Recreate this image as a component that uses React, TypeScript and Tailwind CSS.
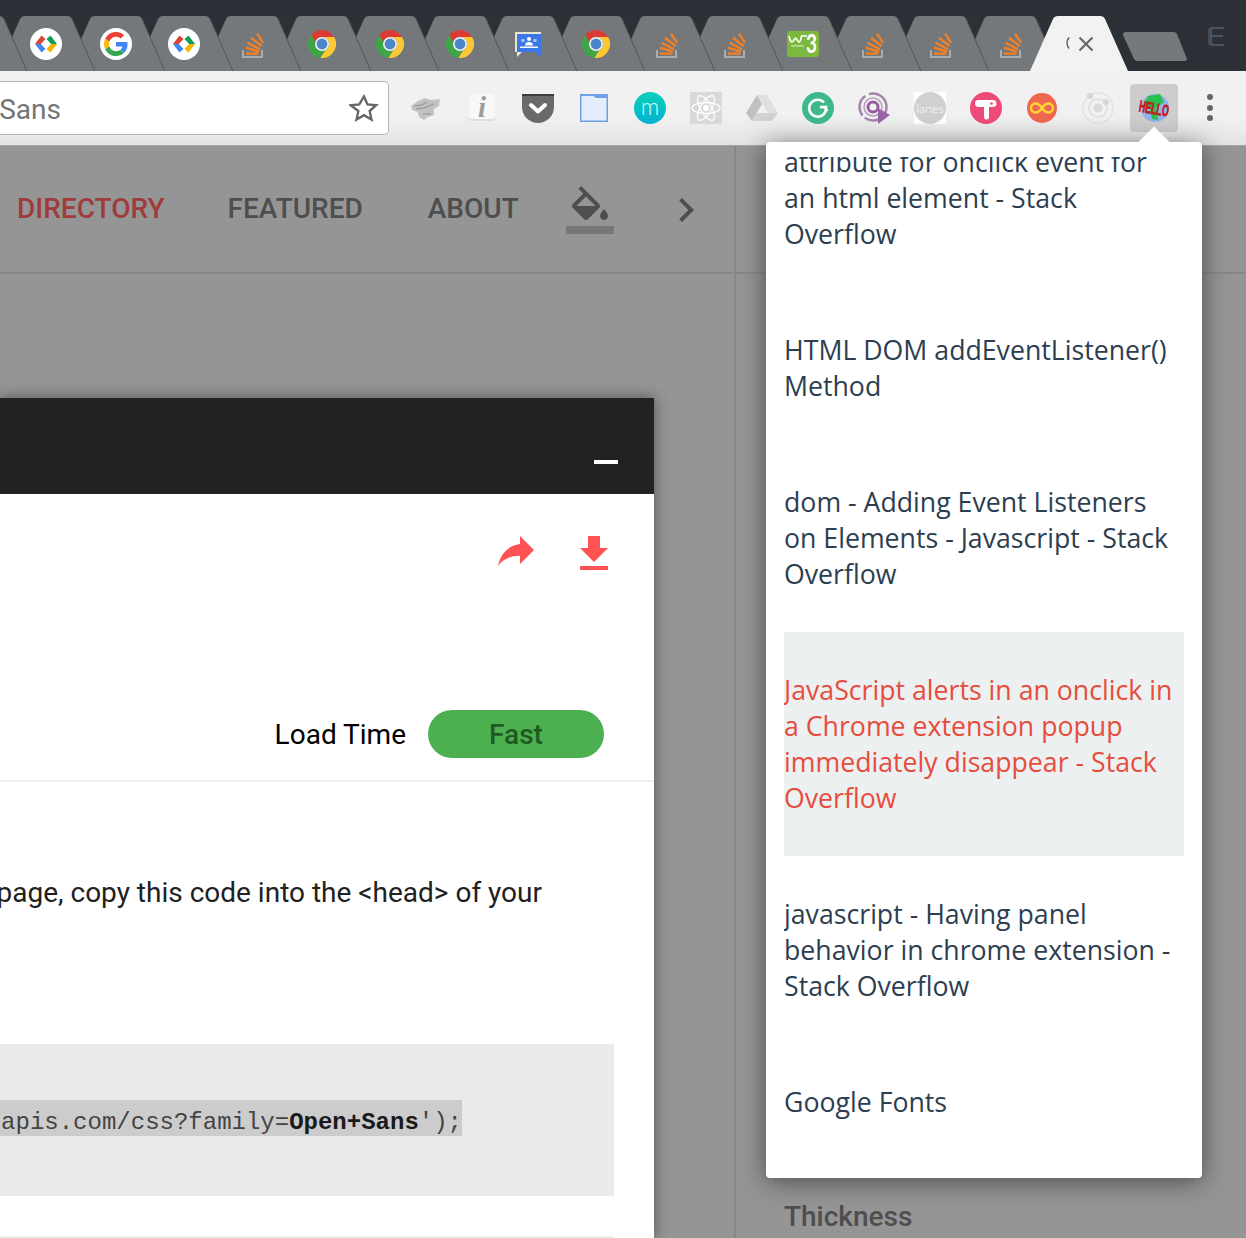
import React from "react";

const Chrome = () => (
  <svg width="28" height="28" viewBox="0 0 28 28">
    <path d="M3.3 5A14 14 0 0 1 26.12 7H14A7 7 0 0 0 7.2 12.2Z" fill="#db3b33" />
    <path d="M3.3 5A14 14 0 0 0 12.4 27.9L17.5 20A7 7 0 0 1 7.2 12.2Z" fill="#3fa648" />
    <path d="M26.12 7A14 14 0 0 1 12.4 27.9L17.5 20A7 7 0 0 0 14 7Z" fill="#fcc934" />
    <circle cx="14" cy="14" r="7" fill="#f1f1f1" />
    <circle cx="14" cy="14" r="5.4" fill="#4a86c8" />
  </svg>
);

const SO = () => (
  <svg width="32" height="32" viewBox="0 0 32 32" fill="none">
    <path d="M7 22v7h19v-7" stroke="#a9adb0" strokeWidth="2" />
    <g stroke="#f48024" strokeWidth="2.4">
      <path d="M21 5.7l6 9" />
      <path d="M15 9.7l10.7 8.3" />
      <path d="M11.5 14.7l12.5 6.6" />
      <path d="M10 19.7l13 4" />
      <path d="M10 25.6h12.4" />
    </g>
  </svg>
);

const GDev = () => (
  <svg width="32" height="32" viewBox="0 0 32 32">
    <circle cx="16" cy="16" r="16" fill="#fff" />
    <path d="M5 16L11.500 7.500 15.500 11 10.800 16z" fill="#db4437" />
    <path d="M5 16h5.800L15.500 21 11.500 24.500z" fill="#4285f4" />
    <path d="M27 16L20.500 7.500 16.500 11 21.200 16z" fill="#0f9d58" />
    <path d="M27 16h-5.800L16.500 21 20.500 24.500z" fill="#f4b400" />
  </svg>
);

const GLogo = () => (
  <svg width="32" height="32" viewBox="0 0 32 32">
    <circle cx="16" cy="16" r="16" fill="#fff" />
    <g transform="translate(4 4) scale(.5)">
      <path d="M24 9.5c3.54 0 6.71 1.22 9.21 3.6l6.85-6.85C35.9 2.38 30.47 0 24 0 14.62 0 6.51 5.38 2.56 13.22l7.98 6.19C12.43 13.72 17.74 9.5 24 9.5z" fill="#EA4335" />
      <path d="M46.98 24.55c0-1.57-.15-3.09-.38-4.55H24v9.02h12.94c-.58 2.96-2.26 5.48-4.78 7.18l7.73 6c4.51-4.18 7.09-10.36 7.09-16.65z" fill="#4285F4" />
      <path d="M10.53 28.59c-.48-1.45-.76-2.99-.76-4.59s.27-3.14.76-4.59l-7.98-6.19C.92 16.46 0 20.12 0 24c0 3.88.92 7.54 2.56 10.78l7.97-6.19z" fill="#FBBC05" />
      <path d="M24 48c6.48 0 11.93-2.13 15.89-5.81l-7.73-6c-2.15 1.45-4.92 2.3-8.16 2.3-6.26 0-11.57-4.22-13.47-9.91l-7.98 6.19C6.51 42.62 14.62 48 24 48z" fill="#34A853" />
    </g>
  </svg>
);

const Classroom = () => (
  <svg width="32" height="32" viewBox="0 0 32 32">
    <path d="M3 4h26v20H10l-5 5v-5H3z" fill="#e9e5d2" />
    <path d="M5 6h24v23l-6-5H5z" fill="#3b78e7" />
    <circle cx="17" cy="11" r="2" fill="#fff" />
    <rect x="9.500" y="11" width="3" height="3" fill="#a9c5f5" />
    <rect x="21.500" y="11" width="3" height="3" fill="#a9c5f5" />
    <path d="M13 17.500c0-2.500 1.800-3.500 4-3.500s4 1 4 3.500z" fill="#fff" />
    <path d="M8 18.500h18V20H8z" fill="#fff" />
  </svg>
);

const W3 = () => (
  <svg width="32" height="32" viewBox="0 0 32 32">
    <rect y="3" width="32" height="26" rx="3" fill="#7cb83e" />
    <path d="M2 8c1 5 1.500 6 3 6s2.500-4 3.500-4 2 4 3.500 4 2-3 2.500-6M14 8h6" stroke="#fff" strokeWidth="1.600" fill="none" />
    <text x="19" y="25" fill="#fff" fontSize="27" fontWeight="700" fontFamily="Lato, sans-serif" textLength="11" lengthAdjust="spacingAndGlyphs">3</text>
    <text x="4" y="19" fill="#fff" fontSize="3.500" fontFamily="Inter, sans-serif">schools</text>
  </svg>
);

const Empty = () => (
  <svg width="32" height="32" viewBox="0 0 32 32">
    <path d="M6 9.500a9 9 0 0 0 0 11" fill="none" stroke="#5e5348" strokeWidth="1.500" />
    <path d="M16.500 9.500l13 13M29.500 9.500l-13 13" stroke="#666a6d" strokeWidth="2.200" />
  </svg>
);

const tabs: [number, React.ReactNode][] = [
  [-22, null],
  [46, <GDev />],
  [116, <GLogo />],
  [184, <GDev />],
  [252, <SO />],
  [322, <Chrome />],
  [390, <Chrome />],
  [460, <Chrome />],
  [528, <Classroom />],
  [596, <Chrome />],
  [666, <SO />],
  [734, <SO />],
  [803, <W3 />],
  [872, <SO />],
  [940, <SO />],
  [1010, <SO />],
  [1079, <Empty />],
];

const Tab = ({ i, icon, active }: { i: number; icon: React.ReactNode; active: boolean }) => {
  const prev = i === 0 ? 0 : tabs[i - 1][0] + 49;
  const left = tabs[i][0] - 49 - prev;
  return (
    <div
      className="relative grid h-[55px] w-[98px] shrink-0 justify-items-center"
      style={{ marginLeft: left, zIndex: active ? 40 : 30 - i }}
    >
      <svg width="98" height="55" viewBox="0 0 98 55" className="col-start-1 row-start-1">
        <path
          d="M0 55L23 3Q24.500 0 28 0H70Q73.500 0 75 3L98 55Z"
          fill={active ? "#f2f2f2" : "#74787b"}
        />
        {!active && <path d="M75 3L98 55" stroke="#53575a" strokeWidth="1" fill="none" />}
      </svg>
      <div className="col-start-1 row-start-1 mt-[12px] flex h-[32px] w-[32px] items-center justify-center">{icon}</div>
    </div>
  );
};

const tool = {
  hello: (
    <svg width="32" height="32" viewBox="0 0 32 32" className="blur-[0.5px]">
      <path d="M1 14l7-5 7-3 6 2 9-1-1 7-5 3v6l-6 2-4 3-5-3-1-5-6-2z" fill="#c2c2c2" />
      <path d="M4 14l8-1 5-3M6 17l8-1 10-4M13 22h8" stroke="#a2a2a2" strokeWidth="1.500" fill="none" />
    </svg>
  ),
  info: (
    <svg width="32" height="32" viewBox="0 0 32 32">
      <rect x="3" y="2" width="26" height="27" rx="3" fill="#dddddd" />
      <rect x="3" y="2" width="26" height="25" rx="3" fill="#f8f8f8" />
      <text x="16" y="25" textAnchor="middle" fill="#9c9c9c" fontSize="29" fontWeight="700" fontStyle="italic" fontFamily="Liberation Serif, serif">i</text>
    </svg>
  ),
  pocket: (
    <svg width="32" height="32" viewBox="0 0 32 32">
      <path d="M0 4a2 2 0 0 1 2-2h28a2 2 0 0 1 2 2v11a16 16 0 0 1-32 0z" fill="#6a6a6a" />
      <path d="M0 2h32v2H0z" fill="#3e3e3e" />
      <path d="M9 13l7 6.500 7-6.500" stroke="#fff" strokeWidth="4" fill="none" strokeLinecap="round" strokeLinejoin="round" />
    </svg>
  ),
  folder: (
    <svg width="32" height="32" viewBox="0 0 32 32">
      <rect x="2" y="2" width="28" height="28" fill="#6f9fe6" />
      <rect x="3.500" y="4" width="25" height="24.500" fill="#e3edfb" />
      <path d="M13 2h17v4H18z" fill="#6f9fe6" />
    </svg>
  ),
  m: (
    <svg width="32" height="32" viewBox="0 0 32 32">
      <defs>
        <linearGradient id="mg" x1="0" y1="0" x2="0" y2="1">
          <stop offset="0" stopColor="#0ad0b8" />
          <stop offset="1" stopColor="#05b2d4" />
        </linearGradient>
      </defs>
      <circle cx="16" cy="16" r="16" fill="url(#mg)" />
      <text x="16" y="23" textAnchor="middle" fill="#d8fbff" fontSize="23" fontWeight="300" fontFamily="Lato, sans-serif">m</text>
    </svg>
  ),
  react: (
    <svg width="32" height="32" viewBox="0 0 32 32" fill="none">
      <rect width="32" height="32" fill="#d9d9d9" />
      <circle cx="16" cy="16" r="3" fill="#fff" />
      <g stroke="#fff" strokeWidth="1.300">
        <ellipse cx="16" cy="16" rx="14" ry="5.500" />
        <ellipse cx="16" cy="16" rx="14" ry="5.500" transform="rotate(60 16 16)" />
        <ellipse cx="16" cy="16" rx="14" ry="5.500" transform="rotate(120 16 16)" />
      </g>
    </svg>
  ),
  drive: (
    <svg width="32" height="32" viewBox="0 0 32 32">
      <path d="M11 3h10l11 18H22z" fill="#dfdfdf" />
      <path d="M11 3l5 9-10 17-6-8z" fill="#c0c0c0" />
      <path d="M11 21h21l-6 8H6z" fill="#d2d2d2" />
    </svg>
  ),
  grammarly: (
    <svg width="32" height="32" viewBox="0 0 32 32" fill="none">
      <circle cx="16" cy="16" r="16" fill="#3dba8c" />
      <path d="M22 10.500a8.500 8.500 0 1 0 1.500 9l.5-4.500h-6l5 .500 2.500 3.500" stroke="#fff" strokeWidth="2.600" />
    </svg>
  ),
  disc: (
    <svg width="32" height="32" viewBox="0 0 32 32" fill="none">
      <circle cx="15" cy="15" r="13.500" stroke="#a684ad" strokeWidth="2.500" strokeDasharray="30 3 22 4" />
      <circle cx="15" cy="15" r="9" stroke="#b89abf" strokeWidth="1.500" />
      <circle cx="15" cy="15" r="5" stroke="#955f9f" strokeWidth="3" />
      <path d="M20 16l12 7-12 9z" fill="#9a64a6" />
    </svg>
  ),
  lanes: (
    <svg width="32" height="32" viewBox="0 0 32 32">
      <rect width="32" height="32" fill="#fff" />
      <circle cx="16" cy="16" r="16" fill="#d0d0d0" />
      <text x="16" y="21" textAnchor="middle" fill="#fff" fontSize="12.500" fontWeight="300" fontFamily="Lato, sans-serif">lanes</text>
    </svg>
  ),
  t: (
    <svg width="32" height="32" viewBox="0 0 32 32">
      <circle cx="16" cy="16" r="16" fill="#ee4a78" />
      <path d="M8 8h15a3 3 0 0 1 0 7h-4v10a2.500 2.500 0 0 1-5 0V15h-5a3.500 3.500 0 0 1-1-7z" fill="#fff" />
      <circle cx="21.500" cy="11.500" r="1.300" fill="#ee4a78" />
    </svg>
  ),
  inf: (
    <svg width="32" height="32" viewBox="0 0 32 32" fill="none">
      <circle cx="16" cy="16" r="15" fill="#f0674f" />
      <path d="M16 16c-2-3-4-4.500-6.500-4.500a4.500 4.500 0 0 0 0 9C12 20.500 14 19 16 16s4-4.500 6.500-4.500a4.500 4.500 0 0 1 0 9C20 20.500 18 19 16 16z" stroke="#fdd835" strokeWidth="2.400" />
    </svg>
  ),
  rings: (
    <svg width="32" height="32" viewBox="0 0 32 32" fill="none">
      <circle cx="16" cy="16" r="15" stroke="#e2e2e2" strokeWidth="1.500" />
      <circle cx="16" cy="16" r="9" stroke="#dedede" strokeWidth="1.500" />
      <circle cx="16" cy="16" r="4.500" fill="#dadada" />
      <circle cx="8" cy="4" r="3" fill="#d6d6d6" />
      <circle cx="24" cy="10" r="3" fill="#d6d6d6" />
    </svg>
  ),
  globe: (
    <svg width="32" height="32" viewBox="0 0 32 32" className="blur-[0.5px]">
      <circle cx="17" cy="16" r="14" fill="#8eb4ee" />
      <path d="M10 4l12-2 4 8-8 6 2 12-6-1-2-10-7-3z" fill="#27c24c" />
      <text x="1" y="22" transform="rotate(10 16 16)" fill="#c81a1a" stroke="#c81a1a" strokeWidth=".8" fontSize="16" fontWeight="700" fontFamily="Liberation Sans, sans-serif" textLength="30" lengthAdjust="spacingAndGlyphs">HELLO</text>
    </svg>
  ),
};

const toolIcons = [tool.hello, tool.info, tool.pocket, tool.folder, tool.m, tool.react, tool.drive, tool.grammarly, tool.disc, tool.lanes, tool.t, tool.inf, tool.rings];

const results = [
  { lines: ["attribute for onclick event for", "an html element - Stack", "Overflow"] },
  { lines: ["HTML DOM addEventListener()", "Method"] },
  { lines: ["dom - Adding Event Listeners", "on Elements - Javascript - Stack", "Overflow"] },
  { lines: ["JavaScript alerts in an onclick in", "a Chrome extension popup", "immediately disappear - Stack", "Overflow"], active: true },
  { lines: ["javascript - Having panel", "behavior in chrome extension -", "Stack Overflow"] },
  { lines: ["Google Fonts"] },
];

export default function App() {
  return (
    <div className="relative flex h-[1238px] w-[1246px] flex-col overflow-hidden bg-[#959595] font-['Roboto',sans-serif]">
      {/* tab strip */}
      <div className="flex h-[71px] shrink-0 items-end bg-[#2c3137]">
        {tabs.map(([, icon], i) => (
          <Tab key={i} i={i} icon={icon} active={i === tabs.length - 1} />
        ))}
        <svg width="64" height="29" viewBox="0 0 64 29" className="mb-[10px] ml-[-5px] shrink-0">
          <path d="M3 0H50Q53 0 54 2L64 27Q64 29 62 29H15Q12 29 11 27L0 3Q0 0 3 0Z" fill="#75797c" />
        </svg>
        <svg width="18" height="20" viewBox="0 0 18 20" className="mb-[24px] ml-[21px] shrink-0" fill="none">
          <path d="M1 1v17" stroke="#8a5240" />
          <path d="M3 1v17" stroke="#3f7fc4" />
          <path d="M3 1h13M3 9h12M3 18h13" stroke="#6a7884" />
        </svg>
      </div>

      {/* toolbar */}
      <div className="flex h-[75px] shrink-0 items-start border-b border-[#a4a4a4] bg-gradient-to-b from-[#f1f1f1] from-60% to-[#e4e4e4] pt-[10px]">
        <div className="flex h-[54px] w-[389px] shrink-0 items-center rounded-r-[5px] border border-l-0 border-[#b6b6b6] bg-white pr-[9px]">
          <div className="flex w-[61px] shrink-0 justify-end overflow-hidden pt-[3px]">
            <span className="shrink-0 whitespace-nowrap text-[28px] text-[#757575]">fonts.google.com/?selection.family=Open+Sans</span>
          </div>
          <svg width="30" height="30" viewBox="0 0 24 24" className="ml-auto" fill="none">
            <path d="M12 2.800l2.800 6.300 6.900.7-5.200 4.600 1.500 6.800-6-3.500-6 3.500 1.500-6.800L1.300 9.800l6.900-.7z" stroke="#666" strokeWidth="1.900" strokeLinejoin="miter" />
          </svg>
        </div>
        <div className="ml-[21px] mt-[11px] flex gap-[24px]">
          {toolIcons.map((ic, i) => (
            <div key={i} className="h-[32px] w-[32px] shrink-0">{ic}</div>
          ))}
        </div>
        <div className="ml-[16px] mt-[3px] flex h-[48px] w-[48px] shrink-0 items-center justify-center rounded-[4px] bg-[#cdcdcd]">
          {tool.globe}
        </div>
        <div className="ml-[29px] mt-[13px] flex flex-col gap-[4.500px]">
          <span className="h-[6px] w-[6px] rounded-full bg-[#666]" />
          <span className="h-[6px] w-[6px] rounded-full bg-[#666]" />
          <span className="h-[6px] w-[6px] rounded-full bg-[#666]" />
        </div>
      </div>

      {/* page */}
      <div className="flex min-h-0 flex-1">
        <div className="flex w-[736px] shrink-0 flex-col border-r-2 border-[#888]">
          <div className="flex h-[128px] shrink-0 items-start border-b-2 border-[#888] pl-[17px] pt-[41px] text-[28px] font-medium leading-[44px] text-[#4e4e4e]">
            <span className="text-[#9e3c3c]">DIRECTORY</span>
            <span className="ml-[63px]">FEATURED</span>
            <span className="ml-[65px]">ABOUT</span>
            <svg width="48" height="48" viewBox="0 0 24 24" className="ml-[47px] mt-[-1px] shrink-0">
              <path d="M16.56 8.94L7.62 0 6.210 1.410l2.380 2.380-5.150 5.150c-.59.59-.59 1.540 0 2.120l5.500 5.500c.29.29.68.44 1.060.44s.77-.15 1.060-.44l5.500-5.500c.59-.58.59-1.530 0-2.120zM5.210 10L10 5.210 14.790 10H5.210zM19 11.500s-2 2.170-2 3.500c0 1.100.9 2 2 2s2-.9 2-2c0-1.330-2-3.500-2-3.500z" fill="#4e4e4e" />
              <path d="M0 20h24v4H0z" fill="#777" />
            </svg>
            <svg width="48" height="48" viewBox="0 0 24 24" className="ml-[48px] mt-[-1px] shrink-0" fill="#4e4e4e">
              <path d="M10 6L8.590 7.410 13.170 12l-4.580 4.590L10 18l6-6z" />
            </svg>
          </div>
          <div className="min-h-0 flex-1 pt-[124px]">
            <div className="h-full w-[654px] bg-white shadow-[0_0_14px_rgba(0,0,0,0.45)]">
              <div className="flex h-[96px] items-end justify-end bg-[#222] pb-[30px] pr-[36px]">
                <span className="h-[4px] w-[24px] bg-white" />
              </div>
              <div className="flex h-[288px] flex-col border-b-2 border-[#eee]">
                <div className="flex justify-end gap-[30px] pr-[36px] pt-[32px]">
                  <svg width="48" height="48" viewBox="0 0 24 24" fill="#ff5252"><path d="M14 9V5l7 7-7 7v-4.100c-5 0-8.500 1.600-11 5.100 1-5 4-10 11-11z" /></svg>
                  <svg width="48" height="48" viewBox="0 0 24 24" fill="#ff5252" className="mt-[4px]"><path d="M19 9h-4V3H9v6H5l7 7 7-7zM5 18v2h14v-2H5z" /></svg>
                </div>
                <div className="mt-[132px] flex items-center justify-end pr-[50px]">
                  <span className="pt-[2px] text-[28px] text-black">Load Time</span>
                  <span className="ml-[22px] flex h-[48px] w-[176px] items-center justify-center rounded-full bg-[#4caf50] pt-[2px] text-[28px] font-medium text-[#1e5a21]">Fast</span>
                </div>
              </div>
              <div className="flex h-[262px] flex-col">
                <div className="mt-[90px] flex justify-end whitespace-nowrap pr-[112px] text-[28px] leading-[42px] text-[#212121]">
                  <span className="shrink-0">To embed a font in your page, copy this code into the &lt;head&gt; of your</span>
                </div>
              </div>
              <div className="flex h-[152px] w-[614px] items-start overflow-hidden bg-[#eaeaea] pt-[56px]">
                <div className="flex h-[36px] w-[462px] shrink-0 justify-end overflow-hidden bg-[#ccc] font-['Liberation_Mono',monospace] text-[24px] leading-[46px] text-[#444]">
                  <span className="shrink-0 whitespace-nowrap">@import url('https://fonts.googleapis.com/css?family=<b className="text-[#1a1a1a]">Open+Sans</b>');</span>
                </div>
              </div>
              <div className="mt-[40px] h-[10px] w-[614px] bg-[#efefef]" />
            </div>
          </div>
        </div>
        <div className="flex min-w-0 flex-1 flex-col">
          <div className="h-[128px] shrink-0 border-b-2 border-[#888]" />
          <div className="mt-auto pb-[2px] pl-[48px] text-[28px] font-medium leading-[38px] text-[#4e4e4e]">Thickness</div>
        </div>
      </div>

      {/* extension popup */}
      <div className="absolute left-[766px] top-[142px] h-[1036px] w-[436px] rounded-[4px] bg-white shadow-[0_3px_26px_rgba(0,0,0,0.5)]">
        <div className="absolute left-[377px] top-[-11px] h-[22px] w-[22px] rotate-45 bg-white" />
        <div className="relative mx-[18px] mt-[15px] h-[1003px] overflow-hidden font-['Open_Sans',sans-serif] text-[26.7px] leading-[36px]">
          <div className="mt-[-53px]">
            {results.map((r, i) => (
              <div key={i} className={r.active ? "bg-[#ecf0f1] py-[40px] text-[#e74c3c]" : "py-[40px] text-[#2c3e50]"}>
                {r.lines.map((l, j) => (
                  <div key={j} className="whitespace-nowrap">{l}</div>
                ))}
              </div>
            ))}
          </div>
        </div>
      </div>
    </div>
  );
}
